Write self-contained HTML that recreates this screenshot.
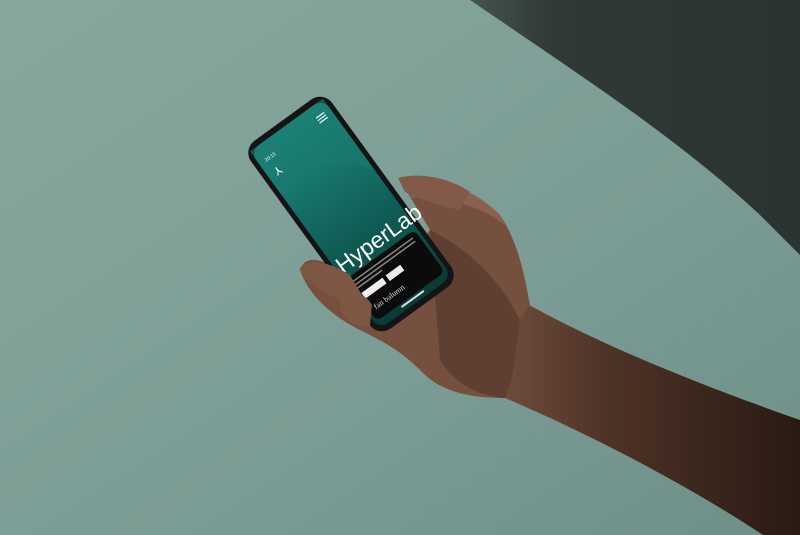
<!DOCTYPE html>
<html><head><meta charset="utf-8"><style>
html,body{margin:0;padding:0;width:800px;height:535px;overflow:hidden;background:#7c9c94}
svg{display:block}
</style></head><body>
<svg width="800" height="535" viewBox="0 0 800 535" xmlns="http://www.w3.org/2000/svg">
<defs>
<linearGradient id="bg" x1="0" y1="0" x2="1" y2="1">
<stop offset="0" stop-color="#87a69e"/><stop offset="0.6" stop-color="#7b9c94"/><stop offset="1" stop-color="#6e8f87"/>
</linearGradient>
<linearGradient id="shadow" x1="0" y1="0" x2="1" y2="0">
<stop offset="0" stop-color="#46554f"/><stop offset="0.25" stop-color="#2f3936"/><stop offset="1" stop-color="#2a3431"/>
</linearGradient>
<linearGradient id="arm" x1="0" y1="0" x2="1" y2="0">
<stop offset="0" stop-color="#6e4c3b"/><stop offset="0.35" stop-color="#4d3327"/><stop offset="1" stop-color="#2a1a13"/>
</linearGradient>
<linearGradient id="scr" x1="0" y1="0" x2="0" y2="1">
<stop offset="0" stop-color="#1f8a7e"/><stop offset="0.6" stop-color="#0f5c55"/><stop offset="1" stop-color="#0a3a35"/>
</linearGradient>
</defs>
<rect width="800" height="535" fill="url(#bg)"/>
<path d="M470 0 L800 0 L800 255 L760 215 C680 140 580 75 470 0Z" fill="url(#shadow)"/>
<path d="M520 300 C600 345 700 385 800 420 L800 535 L763 535 C680 480 580 430 505 398 Z" fill="url(#arm)"/>
<path d="M400 180 C430 175 470 185 500 215 C520 245 525 280 530 305 L520 320 C515 360 512 385 505 398 C470 398 440 392 420 370 C400 350 380 340 360 330 C340 320 310 300 300 270 C305 255 320 258 340 270 L380 290 L430 230 Z" fill="#76503e"/>
<path d="M430 230 C470 250 500 280 520 320 C515 360 512 385 505 398 C480 396 455 385 440 360 Z" fill="#5e3f31"/>
<path d="M400 180 C430 175 470 185 500 215 L505 225 C480 205 440 195 412 198 Z" fill="#8a6150"/>
<g transform="translate(351,214) rotate(-36)">
<rect x="-50" y="-116" width="100" height="232" rx="15" fill="#141414"/>
<rect x="-45" y="-110" width="90" height="220" rx="11" fill="url(#scr)"/>
<path d="M-45 -55 C-10 -70 25 -55 45 -20 L45 -110 L-45 -110Z" fill="#1a7a70" opacity="0.6"/>
<rect x="-42" y="50" width="84" height="52" rx="6" fill="#0b0b0b"/>
<text x="-42" y="44" font-family="Liberation Sans, sans-serif" font-size="23" fill="#fff">HyperLab</text>
<text x="-38" y="-92" font-family="Liberation Sans, sans-serif" font-size="5" fill="#fff">20:15</text>
<text x="-37" y="-74" font-family="Liberation Sans, sans-serif" font-size="11" fill="#fff">⅄</text>
<g stroke="#fff" stroke-width="1.2"><line x1="28" y1="-98" x2="38" y2="-98"/><line x1="28" y1="-95" x2="38" y2="-95"/><line x1="28" y1="-92" x2="38" y2="-92"/></g>
<rect x="-38" y="55" width="74" height="1.5" fill="#888"/>
<rect x="-38" y="59" width="74" height="1.5" fill="#888"/>
<rect x="-38" y="63" width="30" height="1.5" fill="#888"/>
<rect x="-38" y="70" width="26" height="7" fill="#eee"/>
<rect x="-8" y="70" width="18" height="7" fill="#eee"/>
<text x="-36" y="92" font-family="Liberation Serif, serif" font-size="8" fill="#ddd">fan balumn</text>
<rect x="-14" y="104" width="28" height="2" rx="1" fill="#ddd"/>
</g>
<path d="M300 268 C310 258 330 262 350 275 L365 300 C355 305 340 300 330 295 C315 288 302 280 300 268Z" fill="#7d5644"/>
<path d="M340 300 C350 290 365 292 372 305 L370 325 C360 330 345 322 340 310Z" fill="#7d5644"/>
<path d="M398 178 C420 172 450 178 470 192 L460 210 C440 205 420 200 405 192Z" fill="#83594a"/>
</svg>
</body></html>
